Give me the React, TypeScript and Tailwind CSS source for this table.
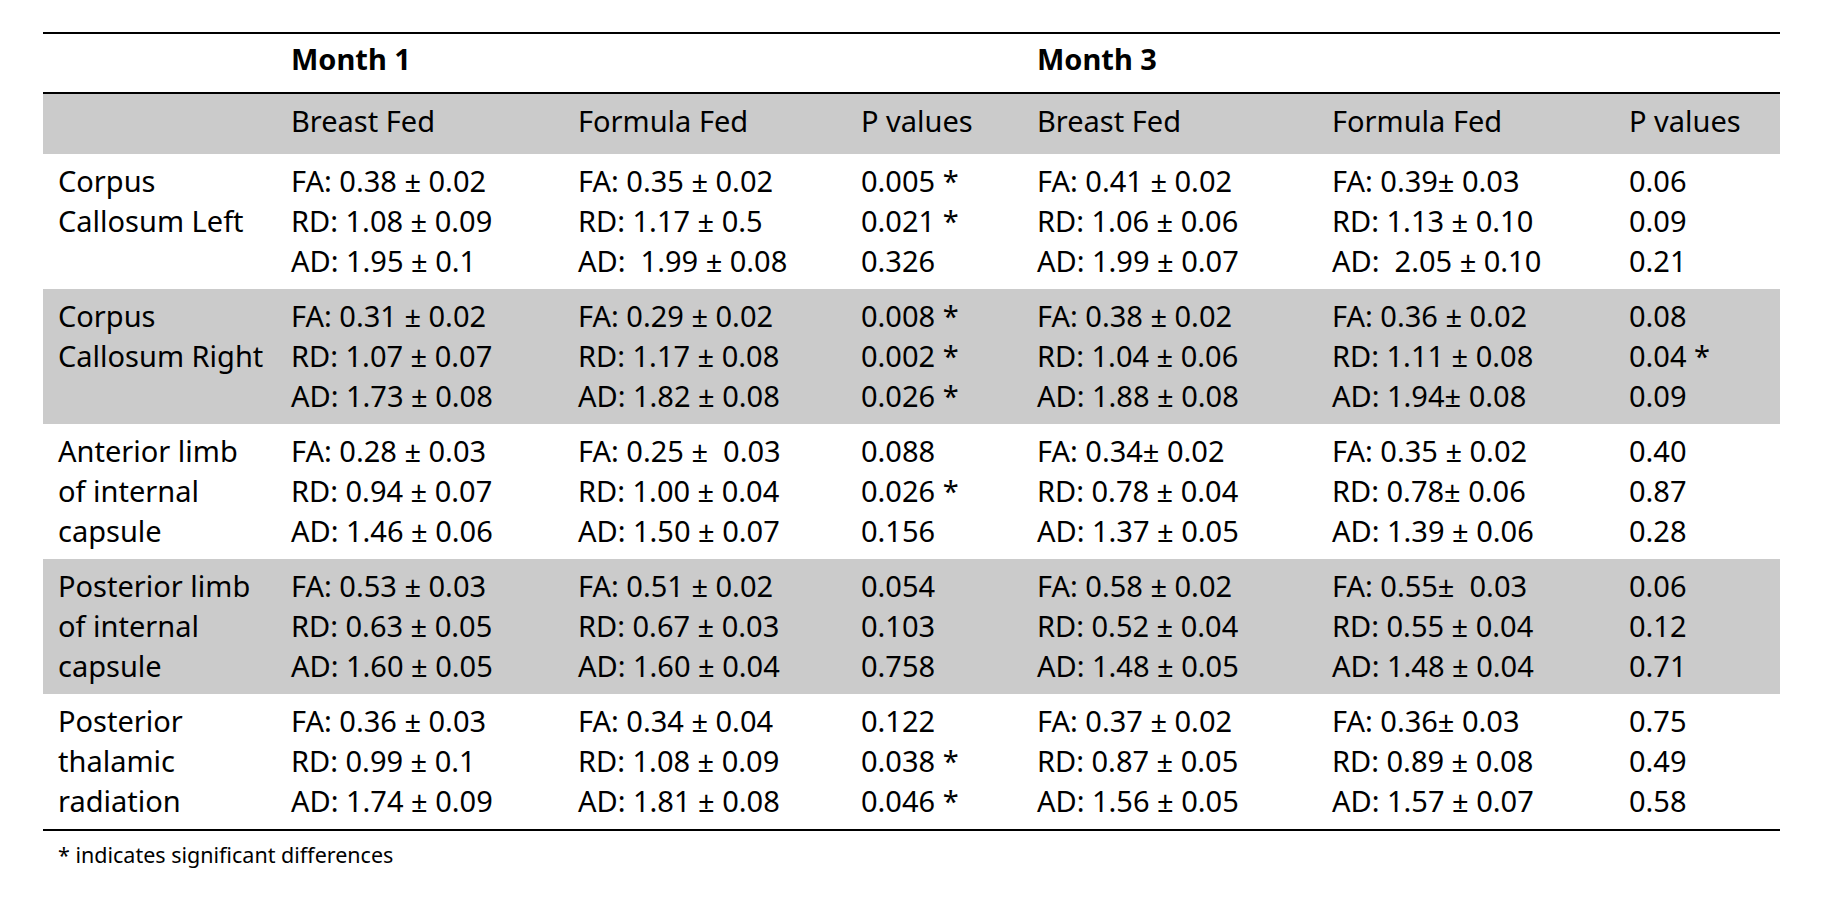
type Row = {
  label: string[];
  cells: string[][];
  shaded: boolean;
};

const rows: Row[] = [
  {
    label: ["Corpus", "Callosum Left"],
    shaded: false,
    cells: [
      ["FA: 0.38 ± 0.02", "RD: 1.08 ± 0.09", "AD: 1.95 ± 0.1"],
      ["FA: 0.35 ± 0.02", "RD: 1.17 ± 0.5", "AD:  1.99 ± 0.08"],
      ["0.005 *", "0.021 *", "0.326"],
      ["FA: 0.41 ± 0.02", "RD: 1.06 ± 0.06", "AD: 1.99 ± 0.07"],
      ["FA: 0.39± 0.03", "RD: 1.13 ± 0.10", "AD:  2.05 ± 0.10"],
      ["0.06", "0.09", "0.21"],
    ],
  },
  {
    label: ["Corpus", "Callosum Right"],
    shaded: true,
    cells: [
      ["FA: 0.31 ± 0.02", "RD: 1.07 ± 0.07", "AD: 1.73 ± 0.08"],
      ["FA: 0.29 ± 0.02", "RD: 1.17 ± 0.08", "AD: 1.82 ± 0.08"],
      ["0.008 *", "0.002 *", "0.026 *"],
      ["FA: 0.38 ± 0.02", "RD: 1.04 ± 0.06", "AD: 1.88 ± 0.08"],
      ["FA: 0.36 ± 0.02", "RD: 1.11 ± 0.08", "AD: 1.94± 0.08"],
      ["0.08", "0.04 *", "0.09"],
    ],
  },
  {
    label: ["Anterior limb", "of internal", "capsule"],
    shaded: false,
    cells: [
      ["FA: 0.28 ± 0.03", "RD: 0.94 ± 0.07", "AD: 1.46 ± 0.06"],
      ["FA: 0.25 ±  0.03", "RD: 1.00 ± 0.04", "AD: 1.50 ± 0.07"],
      ["0.088", "0.026 *", "0.156"],
      ["FA: 0.34± 0.02", "RD: 0.78 ± 0.04", "AD: 1.37 ± 0.05"],
      ["FA: 0.35 ± 0.02", "RD: 0.78± 0.06", "AD: 1.39 ± 0.06"],
      ["0.40", "0.87", "0.28"],
    ],
  },
  {
    label: ["Posterior limb", "of internal", "capsule"],
    shaded: true,
    cells: [
      ["FA: 0.53 ± 0.03", "RD: 0.63 ± 0.05", "AD: 1.60 ± 0.05"],
      ["FA: 0.51 ± 0.02", "RD: 0.67 ± 0.03", "AD: 1.60 ± 0.04"],
      ["0.054", "0.103", "0.758"],
      ["FA: 0.58 ± 0.02", "RD: 0.52 ± 0.04", "AD: 1.48 ± 0.05"],
      ["FA: 0.55±  0.03", "RD: 0.55 ± 0.04", "AD: 1.48 ± 0.04"],
      ["0.06", "0.12", "0.71"],
    ],
  },
  {
    label: ["Posterior", "thalamic", "radiation"],
    shaded: false,
    cells: [
      ["FA: 0.36 ± 0.03", "RD: 0.99 ± 0.1", "AD: 1.74 ± 0.09"],
      ["FA: 0.34 ± 0.04", "RD: 1.08 ± 0.09", "AD: 1.81 ± 0.08"],
      ["0.122", "0.038 *", "0.046 *"],
      ["FA: 0.37 ± 0.02", "RD: 0.87 ± 0.05", "AD: 1.56 ± 0.05"],
      ["FA: 0.36± 0.03", "RD: 0.89 ± 0.08", "AD: 1.57 ± 0.07"],
      ["0.75", "0.49", "0.58"],
    ],
  },
];

const cols =
  "grid grid-cols-[233px_287px_283px_176px_295px_297px_166px]";

const subHeads = [
  "",
  "Breast Fed",
  "Formula Fed",
  "P values",
  "Breast Fed",
  "Formula Fed",
  "P values",
];

function Lines({ lines }: { lines: string[] }) {
  return (
    <div className="pl-[15px]">
      {lines.map((l, i) => (
        <div key={i} className="whitespace-pre leading-[40px]">
          {l}
        </div>
      ))}
    </div>
  );
}

export default function App() {
  return (
    <div className="min-h-[914px] bg-white text-black font-['Noto_Sans',sans-serif] text-[29px]">
      <div className="pt-[32px] pl-[43px]">
        <div className="w-[1737px] border-t-2 border-black">
          {/* month row */}
          <div className={`${cols} h-[58px] pt-[5px] font-bold`}>
            <div />
            <div className="pl-[15px] leading-[40px] col-span-3">Month 1</div>
            <div className="pl-[15px] leading-[40px] col-span-3">Month 3</div>
          </div>
          <div className="border-t-2 border-black" />
          {/* sub header */}
          <div className={`${cols} h-[60px] pt-[7px] bg-[#cbcbcb]`}>
            {subHeads.map((h, i) => (
              <div key={i} className="pl-[15px] leading-[40px]">
                {h}
              </div>
            ))}
          </div>
          {rows.map((r, i) => (
            <div
              key={i}
              className={`${cols} h-[135px] pt-[7px] ${
                r.shaded ? "bg-[#cbcbcb]" : "bg-white"
              }`}
            >
              <Lines lines={r.label} />
              {r.cells.map((c, j) => (
                <Lines key={j} lines={c} />
              ))}
            </div>
          ))}
          <div className="border-t-2 border-black" />
        </div>
        <div className="mt-[10px] pl-[15px] text-[21.5px] leading-[28px]">
          * indicates significant differences
        </div>
      </div>
    </div>
  );
}
